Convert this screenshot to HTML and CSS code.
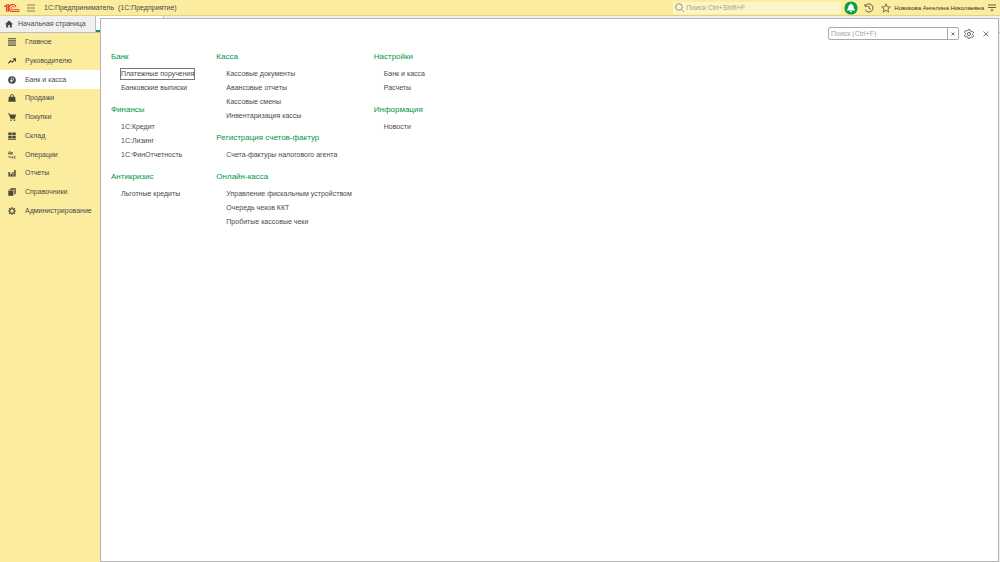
FILE: index.html
```html
<!DOCTYPE html>
<html lang="ru">
<head>
<meta charset="utf-8">
<title>1С:Предприниматель</title>
<link rel="stylesheet" href="styles.css">
</head>
<body>
<div class="app">
  <header class="topbar">
    <svg class="logo" viewBox="0 0 16 10" role="img" aria-label="1С"><g fill="none" stroke="#e5432f"><path d="M.3 3.700 2.600 2.200V8.800M4.300 1V8.800" stroke-width="1.300"/><path d="M12 4A3.500 3.500 0 1 0 9 8.500H15.600" stroke-width="1.100"/><path d="M10.300 4.300A1.600 1.600 0 1 0 9 6.700H15.600" stroke-width="1"/></g></svg>
    <button class="icon-btn burger" aria-label="Меню"><svg viewBox="0 0 8 8"><path d="M0 1h8M0 4h8M0 7h8" stroke="#77704f" stroke-width=".9"/></svg></button>
    <h1 class="app-title">1С:Предприниматель&nbsp; (1С:Предприятие)</h1>
    <label class="global-search">
      <svg viewBox="0 0 9 9" fill="none" stroke="#777" stroke-width=".8"><circle cx="4" cy="4" r="3.3"/><path d="m6.4 6.4 2.4 2.4"/></svg>
      <input type="text" placeholder="Поиск Ctrl+Shift+F" aria-label="Поиск Ctrl+Shift+F">
    </label>
    <button class="bell" aria-label="Уведомления"><svg viewBox="0 0 14 14"><circle cx="7" cy="7" r="6.6" fill="#089c48"/><path d="M7 2.6c.6 0 .8.3.8.8 1.3.4 1.8 1.4 1.9 2.7.1 1.400.6 2 1.300 2.700v.6H3v-.6c.7-.7 1.200-1.300 1.300-2.700.1-1.300.6-2.300 1.900-2.700 0-.5.2-.8.8-.8zM5.800 10h2.400c-.2.9-.6 1.200-1.200 1.200S6 10.900 5.800 10z" fill="#fff"/></svg></button>
    <button class="icon-btn history" aria-label="История"><svg viewBox="0 0 10 10" fill="none" stroke="#55513c" stroke-width=".9"><path d="M1.300 3A4.100 4.100 0 1 1 1.200 6.700M1 1v2.300h2.300M5 2.500V5.300l1.900 1.100"/></svg></button>
    <button class="icon-btn star" aria-label="Избранное"><svg viewBox="0 0 10 10" fill="none" stroke="#55513c" stroke-width=".8"><path d="m5 .9 1.200 2.800 3 .3-2.300 2 .7 3L5 7.400 2.400 9l.7-3L.8 4l3-.3z"/></svg></button>
    <a class="user" href="#">Новикова Ангелина Николаевна</a>
    <button class="icon-btn burger" aria-label="Сервис"><svg viewBox="0 0 8 8"><path d="M0 1h8M0 3.500h8" stroke="#55513c" stroke-width=".9"/><path d="M2.500 5.500h3L4 7.500z" fill="#55513c"/></svg></button>
  </header>

  <div class="tabs">
    <a class="tab" href="#"><svg viewBox="0 0 8 8"><path d="M4 .5 0 4.300h1.200V7.500h2V5h1.600v2.500h2V4.300H8z" fill="#444"/></svg>Начальная страница</a>
    <a class="tab tab-current" href="#" aria-label="Банк и касса"></a>
  </div>

  <div class="body">
    <nav class="sidebar">
      <div class="sections">
      <a href="#"><svg viewBox="0 0 8 8"><path d="M0 .8h8M0 2.900h8M0 5h8M0 7.100h8" stroke="#4b483a" stroke-width="1.100"/></svg>Главное</a>
      <a href="#"><svg viewBox="0 0 8 8"><path d="m.3 6.300 2.300-2.500 1.700 1.500L7 2.300M4.800 1.900h2.700v2.600" fill="none" stroke="#4b483a" stroke-width="1.100"/></svg>Руководителю</a>
      <a href="#" class="current"><svg viewBox="0 0 8 8"><circle cx="4" cy="4" r="3.800" fill="#444"/><path d="M3.300 6.400V2h1.200a1.200 1.200 0 0 1 0 2.500H2.500M2.500 5.400h2" fill="none" stroke="#fff" stroke-width=".7"/></svg>Банк и касса</a>
      <a href="#"><svg viewBox="0 0 8 8"><path d="M.8 2.800h6.400l.5 5H.3z" fill="#4b483a"/><path d="M2.500 4V2a1.500 1.500 0 0 1 3 0v2" fill="none" stroke="#4b483a" stroke-width=".8"/></svg>Продажи</a>
      <a href="#"><svg viewBox="0 0 8 8"><path d="M0 .7h1.300L2.800 5.700h4.400" fill="none" stroke="#4b483a" stroke-width=".9"/><path d="M1.500 1.400H8L7.200 4.900H2.500z" fill="#4b483a"/><circle cx="3" cy="7.200" r=".8" fill="#4b483a"/><circle cx="6.500" cy="7.200" r=".8" fill="#4b483a"/></svg>Покупки</a>
      <a href="#"><svg viewBox="0 0 8 8" fill="#4b483a"><path d="M.3.500h3.400v2.800H.3zM4.300.500h3.400v2.800H4.300zM.3 3.900h3.400v2.600H.3zM4.300 3.900h3.400v2.600H4.300zM0 7h8v.8H0z"/></svg>Склад</a>
      <a href="#"><svg viewBox="0 0 8 8" fill="none" stroke="#4b483a" stroke-width=".7"><path d="M.2 3.400V2.600h.4L1.200.7h1v1.900h.4v.8M.3 2.700h2.200M3.300 3.900V1.500h1.200v1.200H3.300M4 7.300V5.300M4 6.300l1.200-1M4 6.300l1.200 1M7.600 5.300H6.300v2h1.300M1 4.800v1.500h2"/></svg>Операции</a>
      <a href="#"><svg viewBox="0 0 8 8" fill="#4b483a"><path d="M.4 3h1.500v4.500H.4zM2.500 4.500H4v3H2.500zM4.400 3h1.200v4.500H4.400zM6.200 1h1.500v6.500H6.200zM.4 6.800h7.300v.7H.4z"/></svg>Отчеты</a>
      <a href="#"><svg viewBox="0 0 8 8"><path d="M.3 2.500h5v5.300h-5z" fill="#4b483a"/><path d="M1.500 1.500h4.800v5.300M2.700.5h4.800v5.300" fill="none" stroke="#4b483a" stroke-width=".8"/></svg>Справочники</a>
      <a href="#"><svg viewBox="0 0 8 8" fill="none" stroke="#4b483a"><circle cx="4" cy="4" r="2.300" stroke-width="1.100"/><path d="M4 0v1.500M4 6.500V8M0 4h1.500M6.500 4H8M1.200 1.200l1 1M5.800 5.800l1 1M6.800 1.200l-1 1M2.200 5.800l-1 1" stroke-width="1.100"/></svg>Администрирование</a>
      </div>
    </nav>
    <div class="workspace"></div>
  </div>

  <main class="panel">
    <div class="panel-tools">
      <div class="find">
        <input type="text" placeholder="Поиск (Ctrl+F)" aria-label="Поиск (Ctrl+F)">
        <button aria-label="Очистить"><svg viewBox="0 0 4 4"><path d="m.5.5 3 3M3.500.5l-3 3" stroke="#555" stroke-width=".8"/></svg></button>
      </div>
      <button class="icon-btn gear" aria-label="Настройки"><svg viewBox="0 0 10 10" fill="none" stroke="#555" stroke-width=".9"><path d="M4 .7h2l.3 1.300 1 .6 1.300-.4 1 1.700-1 .9v1l1 .9-1 1.700-1.300-.4-1 .6L6 9.300H4l-.3-1.300-1-.6-1.300.4-1-1.700 1-.9v-1l-1-.9 1-1.700 1.300.4 1-.6z"/><circle cx="5" cy="5" r="1.600"/></svg></button>
      <button class="icon-btn close" aria-label="Закрыть"><svg viewBox="0 0 6 6"><path d="m.5.5 5 5M5.500.5l-5 5" stroke="#555" stroke-width=".8"/></svg></button>
    </div>
    <div class="columns">
      <div class="column">
        <section><h2>Банк</h2><ul><li><a class="focused" href="#">Платежные поручения</a></li><li><a href="#">Банковские выписки</a></li></ul></section>
        <section><h2>Финансы</h2><ul><li><a href="#">1С:Кредит</a></li><li><a href="#">1С:Лизинг</a></li><li><a href="#">1С:ФинОтчетность</a></li></ul></section>
        <section><h2>Антикризис</h2><ul><li><a href="#">Льготные кредиты</a></li></ul></section>
      </div>
      <div class="column">
        <section><h2>Касса</h2><ul><li><a href="#">Кассовые документы</a></li><li><a href="#">Авансовые отчеты</a></li><li><a href="#">Кассовые смены</a></li><li><a href="#">Инвентаризация кассы</a></li></ul></section>
        <section><h2>Регистрация счетов-фактур</h2><ul><li><a href="#">Счета-фактуры налогового агента</a></li></ul></section>
        <section><h2>Онлайн-касса</h2><ul><li><a href="#">Управление фискальным устройством</a></li><li><a href="#">Очередь чеков ККТ</a></li><li><a href="#">Пробитые кассовые чеки</a></li></ul></section>
      </div>
      <div class="column">
        <section><h2>Настройки</h2><ul><li><a href="#">Банк и касса</a></li><li><a href="#">Расчеты</a></li></ul></section>
        <section><h2>Информация</h2><ul><li><a href="#">Новости</a></li></ul></section>
      </div>
    </div>
  </main>
</div>
</body>
</html>
```
FILE: styles.css
```css
* { box-sizing: border-box; }
body { margin: 0; font: 7px/14px "Liberation Sans", Arial, sans-serif; color: #4a4a4a; background: #fff; }
a { color: inherit; text-decoration: none; }
svg { display: block; flex: none; }
button { padding: 0; border: 0; background: none; flex: none; }
input { font: inherit; color: #444; padding: 0; border: 0; background: none; min-width: 0; outline: none; }
input::placeholder { color: #a3a3a0; opacity: 1; }
h1, h2, ul { margin: 0; padding: 0; font-weight: 400; list-style: none; }

.app { position: relative; min-height: 100vh; display: flex; flex-direction: column; }

.topbar { display: flex; align-items: center; height: 16px; padding: 0 4px; background: #fbec9e; border-bottom: 1px solid #e0d28c; }
.logo { width: 16px; height: 10px; margin-right: 7px; }
.icon-btn svg { width: 10px; height: 10px; }
.burger svg { width: 8px; height: 8px; }
.app-title { margin-left: 9px; font-size: 7px; line-height: 14px; }
.global-search { display: flex; align-items: center; gap: 2px; width: 168px; height: 12px; margin-left: auto; padding-left: 2px; background: #fdf4c8; border-radius: 1px; }
.global-search svg { width: 9px; height: 9px; }
.global-search input { flex: 1; }
.global-search input::placeholder { color: #a8a287; }
.bell { margin-left: 3px; }
.bell svg { width: 14px; height: 14px; }
.history { margin-left: 6px; }
.star { margin-left: 7px; }
.user { margin: 0 4px 0 3px; white-space: nowrap; font-size: 6px; color: #333; }

.tabs { display: flex; height: 17px; background: #f0f0f0; border-bottom: 1px solid #bdbdbd; }
.tab { display: flex; align-items: center; gap: 5px; width: 96px; padding-left: 5px; white-space: nowrap; border-right: 1px solid #bdbdbd; }
.tab svg { width: 8px; height: 8px; }
.tab-current { width: 68px; background: #fff; border-bottom: 2px solid #089c48; }

.body { flex: 1; display: flex; }
.sidebar { width: 100px; background: #fbec9e; }
.sections { display: grid; grid-auto-rows: 1fr; height: 187px; }
.sidebar a { display: flex; align-items: center; gap: 9px; padding-left: 8px; white-space: nowrap; }
.sidebar svg { width: 8px; height: 8px; }
.sidebar .current { background: #fff; }
.workspace { flex: 1; background: #f0f0f0; }

.panel { position: absolute; top: 18px; right: 1px; bottom: 0; left: 100px; background: #fff; border: 1px solid #b5b5b5; }
.panel-tools { display: flex; align-items: center; justify-content: flex-end; padding: 8px 9px 0 0; }
.find { display: flex; width: 131px; height: 13px; border: 1px solid #aaa; border-radius: 2px; }
.find input { flex: 1; padding-left: 2px; }
.find button { display: grid; place-items: center; width: 11px; border-left: 1px solid #aaa; }
.find button svg { width: 4px; height: 4px; }
.gear { margin-left: 5px; }
.close { margin-left: 9px; }
.close svg { width: 6px; height: 6px; }
.columns { display: flex; gap: 22px; padding: 10px; }
.column section { padding-bottom: 8px; }
h2 { margin-bottom: 3px; font-size: 8px; line-height: 14px; color: #009646; white-space: nowrap; }
li { padding-left: 10px; height: 14px; white-space: nowrap; }
.focused { display: inline-block; line-height: 10px; outline: 1px solid #777; }
```
